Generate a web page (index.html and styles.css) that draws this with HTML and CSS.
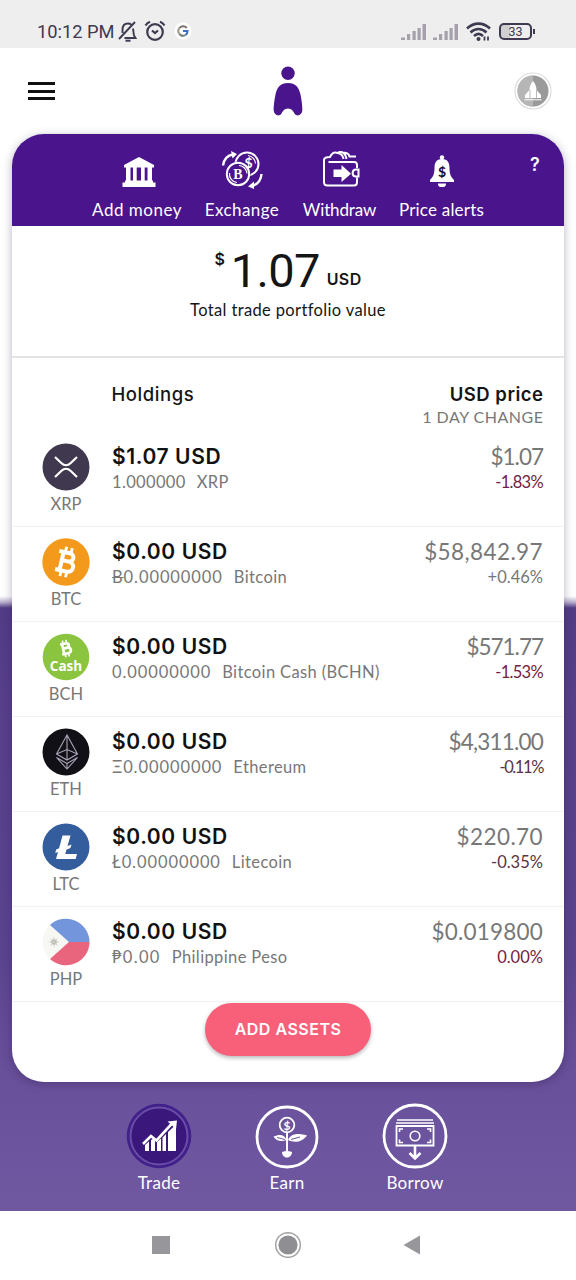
FILE: index.html
```html
<!DOCTYPE html>
<html lang="en">
<head>
<meta charset="utf-8">
<title>Trade portfolio</title>
<link rel="stylesheet" href="styles.css">
</head>
<body>
<div class="screen">
  <div class="status">
    <span class="clock">10:12 PM</span>
    <svg class="st-bell" width="20" height="22" viewBox="0 0 20 22" fill="none" stroke="#3f3a50" stroke-width="1.9"><path d="M1 18L17 1M4.500 12V9c0-4 2-6.500 5.500-6.500 1.500 0 2.500.5 3.300 1.200M15 7.500c.5 3 .5 5 1 7l1.500 2.500H6.500"/><path d="M7.500 19.700h5" stroke-width="2"/></svg>
    <svg class="st-alarm" width="22" height="22" viewBox="0 0 22 22" fill="none" stroke="#3f3a50" stroke-width="2.200"><circle cx="11" cy="12" r="7.800"/><path d="M1.500 5.500Q3 3 6 1.800M20.500 5.500Q19 3 16 1.800"/><path d="M8 10.500l3 2.500 3-2.500"/></svg>
    <svg class="st-g" width="18" height="18" viewBox="0 0 18 18"><circle cx="9" cy="9" r="8.500" fill="#fff"/><g fill="none" stroke-width="2"><path d="M12.800 6A4.600 4.600 0 0 0 5.500 6" stroke="#77706f"/><path d="M5.500 6a4.600 4.600 0 0 0 0 6" stroke="#a09a86"/><path d="M5.500 12a4.600 4.600 0 0 0 6 1" stroke="#6f8576"/><path d="M9 9h4.600a4.600 4.600 0 0 1-2.100 4" stroke="#3f6fc4"/></g></svg>
    <span class="grow"></span>
    <svg class="st-sig" width="26" height="17" viewBox="0 0 26 17" fill="#a5a0ac"><path d="M0 13.500h4V16H0zM6 10h3.200v6H6zM11.500 7h3.200v9h-3.200zM16.500 4h3.200v12h-3.200zM21.500 0H25v16h-3.500z"/></svg>
    <svg class="st-sig2" width="26" height="17" viewBox="0 0 26 17" fill="#a5a0ac"><path d="M0 13.500h4V16H0zM6 10h3.200v6H6zM11.500 7h3.200v9h-3.200zM16.500 4h3.200v12h-3.200zM21.500 0H25v16h-3.500z"/></svg>
    <svg class="st-wifi" width="25" height="20" viewBox="0 0 25 20" fill="none" stroke="#3f3a50" stroke-width="2.600"><path d="M1 6.500c7-6.500 16-6.500 23 0M4.500 10.500c5-4.500 11-4.500 16 0M8 14c3-2.800 6-2.800 9 0"/><circle cx="12.500" cy="17" r="2" fill="#3f3a50" stroke="none"/><path d="M18.500 14.500v4M22 14.500v4" stroke-width="1.800"/></svg>
    <span class="battery">33</span>
  </div>

  <div class="topbar">
    <div class="menu"><i></i><i></i><i></i></div>
    <svg class="logo" width="30" height="52" viewBox="0 0 30 52" fill="#4a148c"><circle cx="15" cy="7.200" r="6.700"/><path d="M15 17c7.500 0 11 4 12.600 12 1 5 1.900 12 1.700 15.500-.3 4.500-5 6.500-7.500 3.500-1.500-2.500-3-5.500-6.800-5.500S9.700 45.500 8.200 48C5.700 51 1 49 .7 44.500.5 41 1.400 34 2.400 29 4 21 7.500 17 15 17z"/></svg>
    <svg class="avatar" width="40" height="40" viewBox="0 0 40 40"><circle cx="20" cy="20" r="18" fill="#fff" stroke="#dedede" stroke-width="1.200"/><circle cx="20" cy="20" r="15.500" fill="#9a9a9a"/><path d="M20 4.500a15.500 15.500 0 0 0 0 31z" fill="#b6b6b6"/><path d="M20 10c2.500 3 3.500 6 3.500 9l4.500 5v3H12v-3l4.500-5c0-3 1-6 3.500-9z" fill="#fff"/><path d="M17 19v8M23.500 19v8" stroke="#aaa" stroke-width=".8"/><path d="M11.500 28.800h17" stroke="#fff" stroke-width="1"/></svg>
  </div>

  <main class="card">
    <div class="actions">
      <div class="action a1"><svg width="34" height="30" viewBox="0 0 34 30" fill="#fff"><path d="M17 0l15 8v2.500H2V8zM4 10h4.500v14H4zM11 10h3.700v14H11zM19 10h3.700v14H19zM25.500 10H30v14h-4.500zM3 23.500h28v2.500H3zM.5 25.500h33V30H.5z"/></svg><span>Add money</span></div>
      <div class="action a2"><svg width="42" height="38" viewBox="0 0 42 38" fill="none" stroke="#fff"><circle cx="26" cy="13" r="11.500" stroke-width="2"/><path d="M27 4.500a8.500 8.500 0 0 1 7.500 8" stroke-width="1.200"/><circle cx="17" cy="23" r="12.500" fill="#4a148c" stroke="none"/><circle cx="17" cy="23" r="11.200" stroke-width="2"/><path d="M8.500 22a8.500 8.500 0 0 0 7.500 9.500M18 14.500a8.500 8.500 0 0 1 8 8" stroke-width="1.200"/><path d="M2 14.500C3 8 6 4.500 12 3.500M40.500 23c-.5 6-4 10.500-9.500 12" stroke-width="2.400"/><path d="M10 0l6 3-4.500 4.500zM33 30.500l-6 5 6 2.500z" fill="#fff" stroke="none"/><text x="17" y="28" class="coin-b">B</text><text x="27.500" y="17" class="coin-s">$</text></svg><span>Exchange</span></div>
      <div class="action a3"><svg width="38" height="38" viewBox="0 0 38 38" fill="none" stroke="#fff" stroke-width="2"><path d="M35 17v-3c0-2-1-3-3-3H6.500M35 26.500V31c0 2.500-1 3.500-3 3.500H5.500c-2.500 0-3.500-1-3.500-3.500V9c0-2.500 2-3 6-3C10 2 13 1 15.500 2c4-2.500 7.500 0 8.500 4l.5 2M15.500 2c4 .5 5.500 3 6 6M21 2c3-1 6 1 6.500 3.500H34"/><path d="M36.500 18.500H34c-4.500 0-4.500 7 0 7h2.500z"/><path d="M11.500 18.500h8V14l9.500 8.700-9.500 8.300v-5h-8z" fill="#fff" stroke="none"/></svg><span>Withdraw</span></div>
      <div class="action a4"><svg width="26" height="33" viewBox="0 0 26 33" fill="#fff"><circle cx="13" cy="2.500" r="2.200"/><path d="M13 4c6 0 7.500 4 7.500 9 0 6 1.500 9 4.500 12v2H1v-2c3-3 4.500-6 4.500-12 0-5 1.500-9 7.500-9zM9 28.500h8c0 3-1.500 3.500-4 3.500s-4-.5-4-3.500z"/><text x="13" y="21.500" class="bell-s">$</text></svg><span>Price alerts</span></div>
      <span class="help">?</span>
    </div>

    <section class="total">
      <div class="amount"><span class="cur">$</span><span class="num">1.07</span><span class="code">USD</span></div>
      <div class="caption">Total trade portfolio value</div>
    </section>

    <div class="heads">
      <div class="h-left">Holdings</div>
      <div class="h-right"><b>USD price</b><span>1 DAY CHANGE</span></div>
    </div>

    <div class="row">
      <div class="coin"><svg width="48" height="48" viewBox="0 0 48 48"><circle cx="24" cy="24" r="23.500" fill="#40384f"/><g fill="none" stroke="#fff" stroke-width="2.200"><path d="M13 14l6.500 6.200c2.600 2.500 6.400 2.500 9 0L35 14M13 34l6.500-6.200c2.600-2.500 6.400-2.500 9 0L35 34"/></g></svg><span>XRP</span></div>
      <div class="hold"><b>$1.07 USD</b><span><span class="qty-one">1.000000</span><em>XRP</em></span></div>
      <div class="price"><span class="p narrow">$1.07</span><span class="neg c1">-1.83%</span></div>
    </div>
    <div class="row">
      <div class="coin"><svg width="48" height="48" viewBox="0 0 48 48"><circle cx="24" cy="24" r="23.700" fill="#f39a1d"/><g transform="rotate(13 24 24)" fill="none" stroke="#fff" stroke-width="4"><path d="M15 14.700h10.500c6.500 0 6.500 8.300 0 8.300H20h6.500c7.500 0 7.500 10.300 0 10.300H15M19.500 14v19"/><path d="M21.200 9v5M27 9v5M21.200 34v5M27 34v5" stroke-width="2.900"/></g></svg><span>BTC</span></div>
      <div class="hold"><b>$0.00 USD</b><span><span class="qty"><i class="btc-sign">B</i>0.00000000</span><em>Bitcoin</em></span></div>
      <div class="price"><span class="p">$58,842.97</span><span>+0.46%</span></div>
    </div>
    <div class="row">
      <div class="coin"><svg width="48" height="48" viewBox="0 0 48 48"><circle cx="24" cy="24" r="23.300" fill="#8bc53f"/><g transform="rotate(-12 24 15)" fill="none" stroke="#fff" stroke-width="2.600"><path d="M19 10.500h5.500c3.800 0 3.800 4.500 0 4.500H22h3c4.500 0 4.500 5.500 0 5.500h-6M21 10v10.500"/><path d="M22 7v3M25.500 7v3M22 21v3M25.500 21v3" stroke-width="1.700"/></g><text x="24" y="37.500" class="cash">Cash</text></svg><span>BCH</span></div>
      <div class="hold"><b>$0.00 USD</b><span><span class="qty">0.00000000</span><em>Bitcoin Cash (BCHN)</em></span></div>
      <div class="price"><span class="p narrow">$571.77</span><span class="neg c1">-1.53%</span></div>
    </div>
    <div class="row">
      <div class="coin"><svg width="48" height="48" viewBox="0 0 48 48"><circle cx="24" cy="24" r="23.500" fill="#111016"/><g fill="none" stroke="#aaa2b5" stroke-width="1.100"><path d="M25 7L14.500 26 25 32l10.500-6zM25 7v25M14.500 26L25 21.500 35.500 26M14.500 29.500L25 41l10.500-11.500L25 35.500zM25 35.500V41"/></g></svg><span>ETH</span></div>
      <div class="hold"><b>$0.00 USD</b><span><span class="qty">Ξ0.00000000</span><em>Ethereum</em></span></div>
      <div class="price"><span class="p narrow p4">$4,311.00</span><span class="neg dim c4">-0.11%</span></div>
    </div>
    <div class="row">
      <div class="coin"><svg width="48" height="48" viewBox="0 0 48 48"><circle cx="24" cy="24" r="23.500" fill="#345d9d"/><path d="M20.500 12.500h8l-3 10.500 4-1.600-1.100 3.700-4 1.600-1.100 4.200H35L33.700 36H14l2-7-2.800 1.100 1-3.700 2.900-1.200z" fill="#fff"/></svg><span>LTC</span></div>
      <div class="hold"><b>$0.00 USD</b><span><span class="qty">Ł0.00000000</span><em>Litecoin</em></span></div>
      <div class="price"><span class="p">$220.70</span><span class="neg dim">-0.35%</span></div>
    </div>
    <div class="row">
      <div class="coin"><svg width="48" height="48" viewBox="0 0 48 48"><circle cx="24" cy="24" r="23.500" fill="#f7f7f4"/><path d="M8 7a23.500 23.500 0 0 1 39.500 17H27z" fill="#7295dc"/><path d="M8 41a23.500 23.500 0 0 0 39.500-17H27z" fill="#e9647d"/><circle cx="12" cy="24" r="2.800" fill="#b9b8ac"/><path d="M12 19v10M7 24h10M8.500 20.500l7 7M8.500 27.500l7-7" stroke="#cccbc2" stroke-width=".8"/></svg><span>PHP</span></div>
      <div class="hold"><b>$0.00 USD</b><span><span class="qty peso">₱0.00</span><em>Philippine Peso</em></span></div>
      <div class="price"><span class="p p6">$0.019800</span><span class="neg">0.00%</span></div>
    </div>

    <div class="foot"><button class="add">ADD ASSETS</button></div>
  </main>

  <nav class="tabs">
    <div class="tab"><svg width="66" height="66" viewBox="0 0 66 66"><circle cx="33" cy="33" r="32.300" fill="#41208a"/><circle cx="33" cy="33" r="28.500" fill="#3a177b" stroke="#6a4da6" stroke-width="2"/><path d="M19 42l4-3.500V48h-4zM25 37l2-1.200 2 2V48h-4zM31 39l4-3.500V48h-4zM36.500 34.500l3.500-3.500V48h-3.500zM42 29l8-7.500V48h-8z" fill="#fff"/><path d="M17 41l8-8 5.500 4.500L46 20.500" fill="none" stroke="#fff" stroke-width="2.600"/><path d="M41.500 18.500l9.500-1-1 8.500z" fill="#fff"/></svg><span>Trade</span></div>
    <div class="tab"><svg width="66" height="66" viewBox="0 0 66 66" fill="none" stroke="#fff"><circle cx="33" cy="34" r="30" stroke-width="2.800"/><circle cx="33" cy="22" r="7.300" stroke-width="1.800"/><path d="M33 30v20" stroke-width="2"/><path d="M32.500 37c-2-6-7-6-13-3.500 3 5 8 5.500 13 3.500zM34 37c2.500-6 9-7.500 19-4.500-5 7-13 7.500-19 4.500zM28 49q5-2 10 0c0 3-2 5.500-5 5.500S28 52 28 49z" fill="#fff" stroke="none"/><path d="M23 34.500l8 2M37 36.500l9-2.500" stroke="#6c549e" stroke-width="1"/><text x="33" y="26.700" class="earn-s">$</text></svg><span>Earn</span></div>
    <div class="tab"><svg width="66" height="66" viewBox="0 0 66 66" fill="none" stroke="#fff"><circle cx="33" cy="33" r="31" stroke-width="2.800"/><path d="M15 17h36M14 20h38" stroke-width="1.500"/><path d="M14.500 23h37v19.500h-37z" stroke-width="1.800"/><circle cx="33" cy="33" r="4.800" stroke-width="1.600"/><path d="M17.500 29v-3H21M17.500 36.500v3H21M48.500 29v-3H45M48.500 36.500v3H45" stroke-width="1.600"/><path d="M33 43v12M27.500 50l5.500 5.500 5.500-5.500" stroke-width="2.600"/></svg><span>Borrow</span></div>
  </nav>

  <div class="sysnav">
    <i class="sq"></i>
    <svg class="home" width="28" height="28" viewBox="0 0 28 28"><circle cx="14" cy="14" r="12.300" fill="none" stroke="#a3a3a3" stroke-width="1.500"/><circle cx="14" cy="14" r="9.600" fill="#8e8e93"/></svg>
    <svg class="back" width="18" height="20" viewBox="0 0 18 20"><path d="M17 .5v19L.5 10z" fill="#97969a"/></svg>
  </div>
</div>
</body>
</html>
```
FILE: styles.css
```css
* { box-sizing: border-box; }
body { margin: 0; }
i, em { font-style: normal; }
svg { display: block; flex: none; }

.screen {
  width: 576px; height: 1280px; overflow: hidden;
  display: flex; flex-direction: column;
  font-family: Lato, "Noto Sans", sans-serif;
  background: linear-gradient(#fff 0, #fff 596px, #bdb3d0 602px, #523c86 608px, #574089 700px, #5b448f 950px, #6a519c 1090px, #7058a1 1211px);
}

.status { height: 48px; background: #eeeeef; display: flex; align-items: flex-start; padding: 0 44px 0 37px; color: #3f3a50; }
.clock { font: 400 18.300px/24px Roboto, sans-serif; margin-top: 20px; width: 80px; white-space: nowrap; }
.st-bell { margin: 21px 0 0 1px; }
.st-alarm { margin: 20px 0 0 6px; }
.st-g { margin: 22px 0 0 8px; }
.grow { flex: 1; }
.st-sig { margin-top: 24px; }
.st-sig2 { margin: 24px 0 0 6px; }
.st-wifi { margin: 22px 0 0 7px; }
.battery { width: 33px; height: 17px; margin: 23px 0 0 8px; border: 2px solid #3f3a50; border-radius: 5px; font: 12.500px/13px Roboto, sans-serif; text-align: center; background: linear-gradient(90deg, #cfcfd2 30%, transparent 30%); position: relative; }
.battery::after { content: ""; position: absolute; right: -5px; top: 4px; width: 2px; height: 5px; background: #3f3a50; }

.topbar { height: 86px; display: grid; grid-template-columns: 245px 30px 1fr; align-items: start; padding: 0 23px 0 28px; }
.menu { width: 27px; margin-top: 34px; display: grid; gap: 4.500px; }
.menu i { height: 3px; background: #111; }
.logo { margin-top: 18px; }
.avatar { margin-top: 23px; justify-self: end; }

.card { width: 552px; height: 948px; margin: 0 12px; border-radius: 32px; background: #fff; overflow: hidden; box-shadow: 0 2px 10px rgba(30, 15, 60, .32); flex: none; }
.actions { height: 92px; background: #4a148c; display: flex; color: #fff; padding-left: 80px; }
.action { display: flex; flex-direction: column; align-items: center; height: 92px; }
.action span { margin-top: auto; font-size: 17px; line-height: 22px; margin-bottom: 5px; white-space: nowrap; }
.a1 { width: 90px; margin-right: 22px; letter-spacing: .5px; }
.a1 svg { margin: 23px 0 0 3px; }
.a2 { width: 76px; margin-right: 23px; letter-spacing: .4px; }
.a2 svg { margin-top: 17px; }
.a3 { width: 73px; margin-right: 23px; letter-spacing: -.15px; }
.a3 svg { margin: 17px 0 0 2px; }
.a4 { width: 85px; letter-spacing: .2px; }
.a4 svg { margin-top: 21px; }
.coin-b, .coin-s, .bell-s, .cash, .earn-s { text-anchor: middle; fill: #fff; stroke: none; font-weight: 700; letter-spacing: 0; }
.coin-b { font-size: 14px; font-family: "Liberation Serif", serif; }
.coin-s { font-size: 14px; }
.bell-s { font-size: 14px; fill: #160a30; }
.cash { font-family: "Open Sans", sans-serif; font-size: 13.500px; }
.earn-s { font-size: 12px; }
.help { font: 600 18px/24px Inter, sans-serif; margin: 19px 0 0 46px; }

.total { height: 132px; border-bottom: 2px solid #e4e4e4; text-align: center; color: #151515; }
.amount { display: flex; justify-content: center; height: 72px; padding-top: 20px; }
.cur { font: 600 16px/26px Inter, sans-serif; margin-right: 6px; }
.num { font: 47px/50px Roboto, sans-serif; letter-spacing: -.7px; }
.code { font: 600 16px/24px Inter, sans-serif; margin: 21px 0 0 7px; letter-spacing: .4px; }
.caption { font-size: 16.500px; line-height: 24px; letter-spacing: .36px; white-space: nowrap; }

.heads { height: 74px; display: flex; justify-content: space-between; padding: 23px 21px 0 99.500px; }
.h-left { font: 500 18.500px/26px Inter, sans-serif; letter-spacing: .55px; color: #151515; }
.h-right { display: flex; flex-direction: column; align-items: flex-end; color: #777; font-size: 16px; line-height: 20px; }
.h-right b { font: 600 18.500px/26px Inter, sans-serif; letter-spacing: .5px; margin-right: -.5px; color: #151515; }
.h-right span { letter-spacing: .5px; margin-right: -.5px; }

.row { height: 95px; border-bottom: 1px solid #f2f2f2; display: flex; padding: 11px 21px 0 0; color: #777; font-size: 16.500px; line-height: 24px; }
.coin { width: 108px; display: flex; flex-direction: column; align-items: center; flex: none; }
.coin svg { margin-top: -.5px; }
.coin span { margin-top: 1.500px; }
.hold { flex: 1; margin-left: -8px; display: flex; flex-direction: column; white-space: nowrap; }
.hold b { font: 600 21px/28px Inter, sans-serif; letter-spacing: .6px; color: #111; margin-bottom: -1px; }
.hold em { margin-left: 11px; letter-spacing: .38px; }
.qty { letter-spacing: .92px; }
.peso { letter-spacing: 1.300px; }
.qty-one { letter-spacing: .35px; }
.price { display: flex; flex-direction: column; align-items: flex-end; }
.p { font-size: 22.500px; line-height: 28px; letter-spacing: .4px; margin-bottom: -1px; }
.narrow { letter-spacing: -1px; }
.p4 { letter-spacing: -.8px; }
.p6 { letter-spacing: .2px; }
.neg { color: #74213f; }
.dim { color: #5c3343; }
.c1 { letter-spacing: -.7px; }
.c4 { letter-spacing: -1.400px; }
.btc-sign { text-decoration: line-through; }

.foot { display: flex; justify-content: center; padding-top: 1px; }
.add { width: 166px; height: 53px; border: 0; padding: 0; border-radius: 27px; background: #f8607a; color: #fff; font: 600 16px/53px Inter, sans-serif; letter-spacing: .5px; box-shadow: 0 2px 4px rgba(0,0,0,.28); }

.tabs { height: 129px; flex: none; display: flex; padding: 21px 0 0 95px; color: #fff; font-size: 17px; line-height: 24px; letter-spacing: .3px; }
.tab { width: 128px; display: flex; flex-direction: column; align-items: center; }
.tab span { margin-top: 2px; }

.sysnav { flex: 1; background: #fff; display: grid; grid-template-columns: 152px 122px 129px 1fr; align-items: start; }
.sq { grid-column: 2; width: 18px; height: 18px; background: #97969a; margin-top: 25px; }
.home { margin-top: 20px; }
.back { margin-top: 24px; }
```
